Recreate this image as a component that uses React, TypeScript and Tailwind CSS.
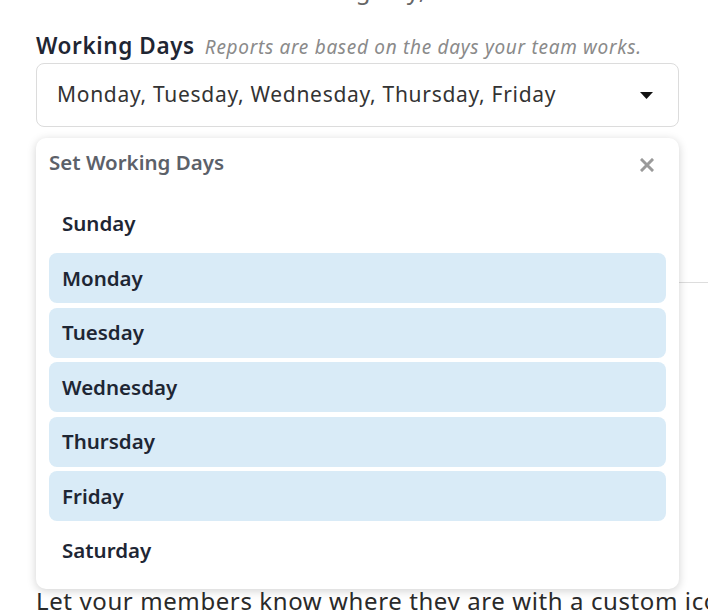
import React from "react";

const days = [
  { name: "Sunday", on: false },
  { name: "Monday", on: true },
  { name: "Tuesday", on: true },
  { name: "Wednesday", on: true },
  { name: "Thursday", on: true },
  { name: "Friday", on: true },
  { name: "Saturday", on: false },
];

export default function App() {
  return (
    <div className="relative w-[708px] h-[610px] overflow-hidden bg-white font-['Noto_Sans',sans-serif]">
      <div className="pl-9">
        <p className="mt-[-26px] h-[32px] leading-[32px] text-[24px] tracking-[0.5px] text-[#666] whitespace-nowrap">
          Set the hours of the working day, like 9-5.
        </p>
        <div className="mt-[25px] flex items-baseline gap-[10px] whitespace-nowrap">
          <span className="text-[22.5px] tracking-[0.6px] font-semibold text-[#1f2633] leading-[30px]">Working Days</span>
          <span className="text-[19px] tracking-[0.7px] italic text-[#8a8a8a]">Reports are based on the days your team works.</span>
        </div>
        <div className="relative mt-[1px] w-[643px]">
          <div className="h-[64px] rounded-[8px] border border-[#dcdcdc] flex items-center justify-between pl-5 pr-[25px]">
            <span className="text-[21px] tracking-[0.7px] text-[#333] whitespace-nowrap">
              Monday, Tuesday, Wednesday, Thursday, Friday
            </span>
            <svg width="13" height="7" viewBox="0 0 13 7" className="mt-[2px]">
              <path d="M0 0 H13 L6.5 7 Z" fill="#111" />
            </svg>
          </div>
          <div className="absolute left-0 right-0 top-[75px] z-10 rounded-[10px] bg-white shadow-[0_2px_10px_rgba(0,0,0,0.18)] px-[13px] pb-[13px]">
            <div className="flex items-center justify-between h-[50px]">
              <span className="text-[20.5px] font-semibold text-[#5c6169]">Set Working Days</span>
              <svg width="14" height="14" viewBox="0 0 14 14" className="mr-[12px] mt-[4px]">
                <path d="M2 2 L12 12 M12 2 L2 12" stroke="#9a9a9a" strokeWidth="3" strokeLinecap="square" />
              </svg>
            </div>
            <div className="flex flex-col gap-[4.5px] pt-[11px]">
              {days.map((d) => (
                <div
                  key={d.name}
                  className={
                    "h-[50px] rounded-[8px] flex items-center pl-[13px] text-[20.5px] font-semibold text-[#1e2634] " +
                    (d.on ? "bg-[#d9ebf7]" : "bg-white")
                  }
                >
                  {d.name}
                </div>
              ))}
            </div>
          </div>
        </div>
        <div className="mt-[155px] h-px bg-[#dddddd] w-[700px]" />
        <p className="mt-[302px] text-[24px] tracking-[0.6px] text-[#2a2a2a] whitespace-nowrap leading-[32px]">
          Let your members know where they are with a custom icon and status.
        </p>
      </div>
    </div>
  );
}
